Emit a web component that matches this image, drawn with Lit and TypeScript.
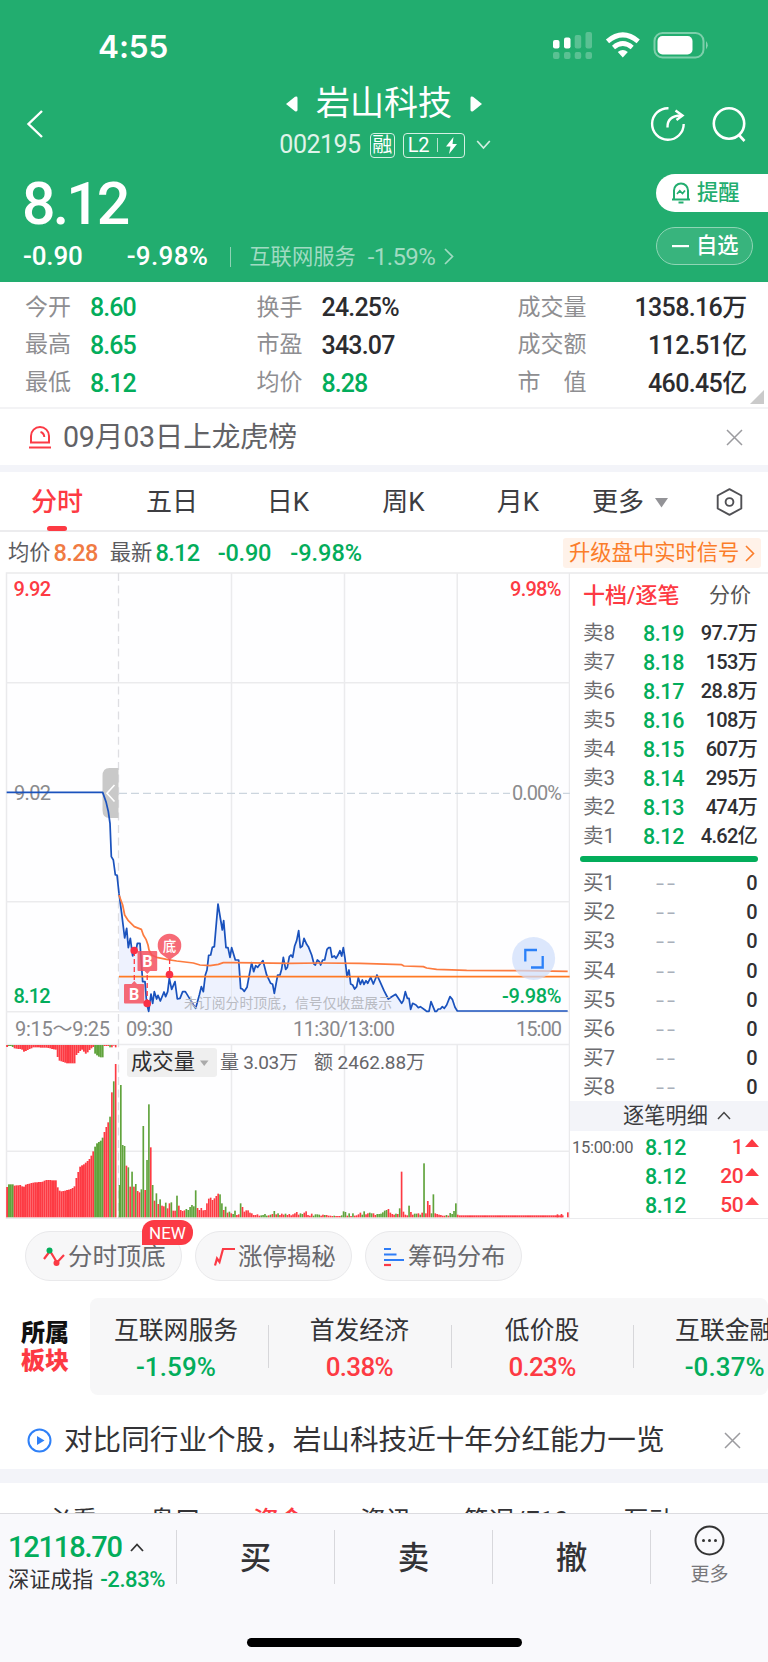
import { LitElement, html, svg, css } from 'lit';
import { customElement, property } from 'lit/decorators.js';

const RED = '#fd3a43';
const GREEN = '#03ad5b';
const VOL_GREEN = '#60a33c';

type Pt = [number, number];

// Price curve, auction part followed by continuous trading (three units per pixel, origin at y = 850).
const AUCTION: Pt[] = [
  [20, -173], [308, -173], [318, -145], [325, -115], [330, -80], [334, 20], [340, 30], [346, 75], [351, 75], [357, 130],
];
const PRICE: Pt[] = [
  [357, 130], [365, 190], [374, 264], [380, 235], [385, 293], [391, 265], [398, 318], [403, 300], [408, 302], [412, 280],
  [420, 280], [428, 395], [435, 395], [440, 460], [446, 484], [453, 432], [458, 460], [463, 425], [470, 447], [474, 436],
  [481, 453], [492, 426], [497, 440], [503, 425], [508, 385], [515, 418], [525, 395], [532, 447], [540, 445], [548, 425],
  [556, 425], [587, 475], [598, 435], [604, 410], [610, 425], [616, 375], [621, 360], [626, 316], [632, 315], [637, 292],
  [643, 290], [654, 162], [667, 240], [671, 212], [678, 293], [684, 293], [690, 322], [695, 293], [706, 330], [716, 330],
  [722, 415], [727, 417], [733, 424], [741, 412], [746, 385], [755, 338], [761, 365], [767, 347], [773, 352], [778, 345],
  [789, 332], [800, 375], [812, 400], [818, 403], [823, 430], [833, 375], [840, 375], [845, 357], [850, 322], [857, 358],
  [862, 352], [868, 320], [873, 315], [878, 322], [884, 288], [890, 272], [896, 242], [901, 293], [907, 288], [912, 265],
  [920, 283], [925, 290], [935, 315], [942, 342], [946, 345], [952, 330], [958, 335], [962, 345], [968, 330], [974, 330],
  [981, 298], [986, 293], [991, 293], [996, 322], [1003, 318], [1008, 325], [1014, 315], [1020, 302], [1025, 318],
  [1030, 293], [1035, 325], [1041, 380], [1047, 360], [1052, 402], [1058, 405], [1064, 417], [1070, 410], [1075, 383],
  [1081, 403], [1087, 390], [1092, 403], [1098, 392], [1103, 400], [1112, 382], [1120, 402], [1131, 375], [1140, 395],
  [1152, 422], [1165, 447], [1175, 440], [1187, 433], [1205, 460], [1210, 452], [1216, 425], [1222, 445], [1227, 445],
  [1232, 478], [1238, 460], [1248, 465], [1255, 473], [1261, 470], [1275, 480], [1280, 484], [1287, 484], [1293, 455],
  [1305, 484], [1310, 484], [1315, 477], [1321, 477], [1327, 470], [1333, 475], [1340, 465], [1350, 440], [1357, 448],
  [1365, 472], [1372, 483], [1703, 483],
];
const AVERAGE: Pt[] = [
  [357, 135], [368, 165], [374, 195], [385, 212], [403, 230], [424, 238], [430, 255], [438, 268], [444, 285], [447, 300],
  [455, 315], [470, 322], [500, 328], [530, 333], [580, 339], [600, 345], [630, 347], [655, 343], [670, 338], [700, 338],
  [870, 340], [960, 339], [1080, 340], [1205, 344], [1212, 348], [1270, 350], [1280, 354], [1310, 358], [1400, 361],
  [1560, 362], [1703, 364],
];

// Call-auction volume envelopes (three units per pixel, origin at y = 1030).
const AUCTION_VOL: Pt[] = [
  [20, 473], [24, 463], [38, 463], [42, 467], [64, 465], [68, 473], [78, 463], [105, 457], [130, 455], [135, 450],
  [169, 451], [173, 475], [180, 485], [195, 482], [215, 476], [224, 468], [230, 438], [240, 410], [255, 400], [270, 385],
  [281, 360], [288, 342], [305, 330], [315, 300], [325, 275], [330, 260], [335, 190], [341, 155], [347, 100],
];
const UNMATCHED: Pt[] = [
  [20, 52], [24, 48], [36, 48], [40, 55], [65, 58], [70, 66], [78, 62], [100, 52], [140, 53], [169, 60], [174, 90],
  [200, 100], [224, 100], [229, 74], [245, 58], [258, 72], [270, 58], [280, 50], [284, 70], [298, 82], [308, 82],
  [312, 48], [325, 48], [330, 52], [335, 53], [341, 47], [347, 52],
];
const inRanges = (x: number, r: number[][]) => r.some(([a, b]) => x >= a && x <= b);

function sample(pts: Pt[], x: number): number {
  for (let i = 1; i < pts.length; i++) {
    if (x <= pts[i][0]) {
      const [x0, y0] = pts[i - 1];
      const [x1, y1] = pts[i];
      return y0 + ((y1 - y0) * (x - x0)) / (x1 - x0);
    }
  }
  return pts[pts.length - 1][1];
}

// Volume bar heights; a negative number is a falling minute.
const OPEN_VOL = [
  -397, -217, -214, 155, -150, 92, -137, 92, -100, 79, 75, -84, -274, 82, -172, -339, 210, -97, 50, -72, 40, -54, 35, 33,
  -44, 27, 42, -45, 20, 20, -65, 35, 22, 19, 21, -25, -22, -31, -37, -33, -81, 28, 22, 28, 21, 22, 42, 56, 59, 52, 57, 64,
  71, -69, -42, 22, -32, 14, -17, 12, -10, -20, 7, 9, -42, 31, 17, 21, 21, 14, 12, 7, 7, 9, 5, -6, -7, -10, -5, 6, -8, 10,
  -19, 9, -12, 7, 11, 8, -11, 7, 10, 6, 9, 12, 16, 8, -12, -10, 14, 18, 7, 5, 11, -5, -9, -9, -8, 5, 8, -7, 7, 5, 5, 4,
  -5, 4, 4, 4, -6, -18, -16, 5, -12, 4, -12, 5, 6, 9, 14, -8, -18, 9, 12, -14, -12, 12, 7, -10, -10, -11, -15, -20,
  -22, 25, 14, 10, 8, -11, 10, -27, 137, 17, 8, 6, -35, 16, 8, -11, -11, 12, -8, 14, -162, 12, 49, 37, -12, -69, 12, 10, 8,
  7, 5, 5, -7, 5, -13, -10, -19, -42, 8,
];

const line = (pts: Pt[]) => pts.map((p) => p.join(',')).join(' ');

@customElement('minute-chart')
export class MinuteChart extends LitElement {
  static styles = css`
    :host { display: block; width: 570px; height: 647px; flex: none; }
    svg { display: block; font-family: Roboto, 'Noto Sans CJK SC', sans-serif; font-size: 20px; }
    .m { font-weight: 500; }
    .bold { font-weight: 700; }
  `;

  private bars() {
    const out: unknown[] = [];
    const bar = (x: number, y: number, h: number, fill: string, w = 5) =>
      out.push(svg`<rect x=${x.toFixed(1)} y=${y} width=${w} height=${h} fill=${fill}></rect>`);
    for (let i = 0; i < 59; i++) {
      const x = 18.5 + i * 5.62;
      const m = x + 2.3;
      const top = Math.round(sample(AUCTION_VOL, m));
      const w = i > 52 ? 5 : 5.7;
      bar(x, top, 562 - top, inRanges(m, [[22, 39], [283, 310], [327, 333], [338, 344]]) ? VOL_GREEN : RED, w);
      const low = sample(UNMATCHED, m);
      bar(x, 45, Math.round(low - 45), inRanges(m, [[22, 39], [283, 310], [327, 333]]) ? VOL_GREEN : RED, w);
    }
    bar(356, 465, 97, VOL_GREEN);
    OPEN_VOL.forEach((v, i) => bar(360 + i * 5.615, 562 - Math.abs(v), Math.abs(v), v < 0 ? VOL_GREEN : RED));
    for (let x = 360 + OPEN_VOL.length * 5.615; x < 1690; x += 5.615) bar(x, 556, 6, RED, 5.7);
    bar(1670, 553, 9, RED);
    bar(1682, 552, 10, RED);
    bar(1701, 547, 15, RED);
    return out;
  }

  render() {
    return html`<svg width="570" height="647" viewBox="0 572 570 647">
      <rect x="6.5" y="573" width="563" height="645.5" fill="#fefeff" stroke="#eaeaec" stroke-width="1.5"></rect>
      <g stroke="#ebebed" stroke-width="1.5">
        <path d="M6 682.8H570M6 901.8H570M6 1011.7H570M6 1044.5H570M6 1151.3H570"></path>
        <path d="M231.5 573V1011M344.5 573V1011M457.2 573V1011M231.5 1044V1218M344.5 1044V1218M457.2 1044V1218"></path>
      </g>
      <path d="M118.5 573V1218" stroke="#dedee2" stroke-width="1.3" stroke-dasharray="8 4.6"></path>
      <path d="M119 793.3H570" stroke="#ccd5de" stroke-width="1.2" stroke-dasharray="8 4"></path>
      <g transform="translate(0 850) scale(.33333)" fill="none" stroke-linejoin="round">
        <polygon points="357,484 ${line(PRICE.slice(0, -1))} 1372,484" fill="#eef2fe"></polygon>
      </g>
      <path d="M119 902H231M231.5 902V1011M344.5 940V1011" stroke="#e6e8ee" stroke-width="1"></path>
      <text x="14" y="800.3" fill="#8b8b8d" textLength="37">9.02</text>
      <path d="M118.5 768H109.500Q102.500 768 102.500 776V810Q102.500 818 109.500 818H118.500Z" fill="#c9c9c9"></path>
      <path d="M114.500 785L107 793.300L114.500 801.500" fill="none" stroke="#fff" stroke-width="1.6"></path>
      <g transform="translate(0 850) scale(.33333)" fill="none" stroke-linejoin="round" stroke-width="5.200">
        <polyline points=${line(AUCTION)} stroke="#1a52bd"></polyline>
        <polyline points=${line(PRICE)} stroke="#1a52bd"></polyline>
        <polyline points=${line(AVERAGE)} stroke="#fc7b3f"></polyline>
        <path d="M357 380H1709" stroke="#ff7a24"></path>
      </g>
      <text x="13.500" y="596" fill=${RED} class="m" textLength="37.500">9.92</text>
      <text x="510" y="596" fill=${RED} class="m" textLength="51.500">9.98%</text>
      <rect x="510" y="790" width="53" height="6" fill="#fefeff"></rect>
      <text x="512" y="800.300" fill="#8b8b8d" textLength="50">0.00%</text>
      <text x="13.500" y="1003.300" fill=${GREEN} class="m" textLength="37">8.12</text>
      <text x="502" y="1003.300" fill=${GREEN} class="m" textLength="59.500">-9.98%</text>
      <text x="184" y="1007.500" fill="#b9bbc2" font-size="13.800" textLength="208">未订阅分时顶底，信号仅收盘展示</text>
      <g fill="#88888b">
        <text x="15" y="1036" textLength="95">9:15～9:25</text>
        <text x="126" y="1036" textLength="47">09:30</text>
        <text x="293" y="1036" textLength="102">11:30/13:00</text>
        <text x="516" y="1036" textLength="46">15:00</text>
      </g>

      <g stroke=${RED} stroke-width="1.300" stroke-dasharray="5 3"><path d="M134.300 951V981M147.200 975V1003M169.600 959V974"></path></g>
      <g fill="#f5525f" fill-opacity=".86">
        <path d="M138.500 951H156.200Q157.200 951 157.200 952V970Q157.200 971 156.200 971H150L147.300 974L144.500 971H138.500Q137.500 971 137.500 970V952Q137.500 951 138.500 951Z"></path>
        <path d="M125 984H131.500L134.300 981L137 984H143.200Q144.200 984 144.200 985V1002.500Q144.200 1003.500 143.200 1003.500H125Q124 1003.500 124 1002.500V985Q124 984 125 984Z"></path>
        <path d="M169.500 960L162.500 955A11.800 11.800 0 1 1 176.500 955Z"></path>
      </g>
      <g fill="#fff" text-anchor="middle">
        <text x="147.300" y="967" font-size="16" class="bold">B</text>
        <text x="134.200" y="1000" font-size="16" class="bold">B</text>
        <text x="169.500" y="951" font-size="13.500" class="m">底</text>
      </g>
      <g fill="#fa3046"><circle cx="134.200" cy="950.500" r="3.800"></circle><circle cx="147.200" cy="1003.500" r="3.800"></circle><circle cx="169.500" cy="974.500" r="3.800"></circle></g>
      <circle cx="533.600" cy="958.500" r="21.500" fill="#cfdefb" fill-opacity=".72"></circle>
      <path d="M525.300 961.500V950H537M531 967.500H542.700V956" fill="none" stroke="#2b80f8" stroke-width="2.300"></path>

      <g transform="translate(0 1030) scale(.33333)">${this.bars()}</g>
      <rect x="127" y="1048" width="90" height="29" rx="3" fill="#efefef"></rect>
      <text x="131" y="1069" fill="#2d2d30" font-size="21.300" textLength="64">成交量</text>
      <path d="M200 1060.500H208.500L204.200 1066Z" fill="#aaa"></path>
      <g fill="#66666a" font-size="19">
        <text x="220" y="1069" textLength="78">量 3.03万</text>
        <text x="314" y="1069" textLength="111">额 2462.88万</text>
      </g>
    </svg>`;
  }
}

@customElement('order-book')
export class OrderBook extends LitElement {
  static styles = css`
    :host { display: block; width: 198px; height: 647px; box-sizing: border-box; border-top: 2px solid #eeeeef; border-bottom: 1.5px solid #ebebed;
      font: 20px/29.15px Roboto, 'Noto Sans CJK SC', sans-serif; color: #303033; }
    .head { display: flex; height: 44.500px; align-items: center; padding: 0 17px 2px 13px; justify-content: space-between; font-size: 21px; color: #555; box-sizing: border-box; }
    .head b { color: #fd3a43; font-weight: 500; font-size: 22px; }
    .row { display: grid; grid-template-columns: 43px 58px 1fr; height: 29.15px; padding: 0 11px 0 13px; white-space: nowrap; align-items: center; }
    .lbl { color: #6c6c70; font-size: 20.500px; letter-spacing: -.1px; }
    .px { color: #03ad5b; font-weight: 500; font-size: 21.500px; text-align: right; letter-spacing: -.4px; }
    .qty { text-align: right; font-size: 20px; font-weight: 500; letter-spacing: -.7px; }
    .none { display: flex; gap: 4px; padding-left: 30px; }
    .none span { font-size: 20px; width: 7px; transform: scaleX(1.45); transform-origin: left; color: #a9b0bb; }
    .strength { height: 6px; margin: 4.500px 10px 7px; border-radius: 3px; background: #03ad5b; }
    .detail { height: 30px; display: flex; align-items: center; justify-content: center; gap: 9px; background: #f3f4f9; font-size: 21.200px; color: #3c3c40; margin: -1.500px 0 2px; padding-left: 16px; }
    .tick { padding: 0 9px 0 2px; grid-template-columns: 69px 43px 1fr; }
    .tick .px { width: 45px; }
    .time { font-size: 16.5px; letter-spacing: -.3px; color: #5e5e62; }
    .up { color: #fd3a43; font-weight: 500; display: flex; justify-content: flex-end; gap: 2px; letter-spacing: -.6px; font-size: 21px; }
    .up svg { margin-top: 6px; }
  `;
  render() {
    const asks = [['8', '8.19', '97.7万'], ['7', '8.18', '153万'], ['6', '8.17', '28.8万'], ['5', '8.16', '108万'], ['4', '8.15', '607万'], ['3', '8.14', '295万'], ['2', '8.13', '474万'], ['1', '8.12', '4.62亿']];
    return html`
      <div class="head"><b>十档/逐笔</b><span>分价</span></div>
      ${asks.map(([n, p, q]) => html`<div class="row"><span class="lbl">卖${n}</span><span class="px">${p}</span><span class="qty">${q}</span></div>`)}
      <div class="strength"></div>
      ${[1, 2, 3, 4, 5, 6, 7, 8].map((n) => html`<div class="row"><span class="lbl">买${n}</span><span class="none"><span>-</span><span>-</span></span><span class="qty">0</span></div>`)}
      <div class="detail">逐笔明细<svg width="14" height="9" viewBox="0 0 14 9"><path d="M1 8L7 1.500L13 8" fill="none" stroke="#444" stroke-width="1.500"></path></svg></div>
      ${[['15:00:00', '1'], ['', '20'], ['', '50']].map(([t, q]) => html`<div class="row tick"><span class="time">${t}</span><span class="px">8.12</span>
        <span class="up">${q}<svg width="14" height="9"><path d="M7 0L14 8H0Z" fill="#fd3a43"></path></svg></span></div>`)}
    `;
  }
}

@customElement('close-mark')
export class CloseMark extends LitElement {
  static styles = css`:host { display: block; width: 17px; height: 17px; } svg { display: block; }`;
  render() {
    return html`<svg width="17" height="17"><path d="M1 1L16 16M16 1L1 16" stroke="#9b9b9f" stroke-width="1.500"></path></svg>`;
  }
}

@customElement('stat-cell')
export class StatCell extends LitElement {
  @property() label = '';
  @property() value = '';
  @property({ type: Boolean }) down = false;
  @property({ type: Boolean }) wide = false;
  static styles = css`
    :host { display: flex; align-items: center; height: 37.7px; font-size: 23px; white-space: pre; }
    .l { color: #8e8e91; width: 65px; }
    .v { font-size: 25px; font-weight: 500; letter-spacing: -.8px; color: #2c2c2f; padding-top: 2px; }
    .v.down { color: #03ad5b; letter-spacing: -.95px; }
    .v.wide { margin-left: auto; letter-spacing: -.65px; }
  `;
  render() {
    return html`<span class="l">${this.label}</span><span class="v ${this.down ? 'down' : ''} ${this.wide ? 'wide' : ''}">${this.value}</span>`;
  }
}

@customElement('app-root')
export class AppRoot extends LitElement {
  static styles = css`
    :host { display: flex; flex-direction: column; width: 768px; height: 1662px; overflow: hidden; background: #fff;
      font-family: Roboto, 'Noto Sans CJK SC', sans-serif; color: #333336; line-height: 1.2; white-space: nowrap; }
    svg { display: block; flex: none; }
    .row { display: flex; align-items: center; }
    header { height: 282px; background: #22ad6f; color: #fff; flex: none; }
    .status { display: flex; height: 84px; padding: 6px 59px 0 98px; box-sizing: border-box; align-items: center; justify-content: space-between; }
    .clock { font: 600 31.5px Inter, sans-serif; letter-spacing: -.1px; margin-top: 3px; }
    .nav { display: grid; grid-template-columns: 180px 1fr 180px; grid-template-rows: 80px; height: 80px; align-items: center; }
    .back { padding-left: 26px; }
    .tools { display: flex; justify-content: flex-end; gap: 26px; padding-right: 22px; }
    .title { display: flex; flex-direction: column; align-items: center; gap: 6px; align-self: start; margin-top: -2px; }
    .name { display: flex; align-items: center; gap: 18px; font-size: 34px; line-height: 42px; }
    .name svg { margin-top: 2px; }
    .code { display: flex; align-items: center; font-size: 25px; letter-spacing: -.5px; line-height: 30px; margin-left: 2px; }
    .code .num { opacity: .86; }
    .tag { border: 1.6px solid #d5f0e3; border-radius: 4px; height: 25px; box-sizing: border-box; line-height: 22px; font-size: 20px; margin-left: 9px; padding: 0 1.500px; letter-spacing: 0; display: flex; align-items: center; }
    .l2 { width: 62px; margin-left: 8px; font-size: 20px; padding-left: 4px; letter-spacing: -.3px; }
    .l2 i { width: 1px; height: 14px; background: #b8e3cf; margin: 0 8px 0 8px; }
    .caret { margin-left: 11px; }
    .main { display: flex; justify-content: space-between; padding: 11px 0 0 22px; }
    .price { font-size: 59px; font-weight: 500; letter-spacing: -2.9px; line-height: 58px; }
    .change { display: flex; align-items: center; font-size: 26px; font-weight: 500; letter-spacing: -.15px; margin-top: 9px; height: 30px; margin-left: 1px; }
    .change .pct { margin-left: 44px; letter-spacing: .35px; }
    .change i { width: 1px; height: 20px; background: #8fd3b5; margin: 0 18px 0 22px; }
    .sector { display: flex; align-items: center; color: #a0dbc2; font-weight: 400; font-size: 21.300px; letter-spacing: 0; }
    .sector span { font-size: 24px; letter-spacing: -.6px; margin: 0 9px 0 12px; }
    .btns { width: 112px; display: flex; flex-direction: column; gap: 15px; font-size: 21.300px; font-weight: 500; margin-top: -1px; }
    .remind { height: 38px; border-radius: 19px 0 0 19px; background: #fff; color: #22ad6f; display: flex; align-items: center; gap: 6px; padding-left: 15px; }
    .fav { height: 38px; width: 97px; box-sizing: border-box; border-radius: 19px; border: 1.500px solid #8fd5b5; background: #38b47d; display: flex; align-items: center; gap: 7px; padding-left: 15px; }
    .stats { height: 125px; display: grid; grid-template-columns: 231.500px 261px 229px; grid-auto-rows: 37.700px; padding: 6.500px 0 0 25px; box-sizing: border-box; flex: none; position: relative; }
    .corner { position: absolute; right: 4px; bottom: 3px; }
    .notice { height: 58px; border-top: 2px solid #f3f3f5; box-sizing: border-box; padding: 0 25px 0 29px; color: #626266; font-size: 28.600px; flex: none; }
    .notice .txt { margin-left: 12px; flex: 1; }
    .notice .txt.d { letter-spacing: -.2px; }
    .band { background: #f3f4f9; flex: none; height: 7px; }
    .band.thick { height: 14px; }
    .tabs { height: 60px; border-bottom: 2px solid #ececee; box-sizing: border-box; font-size: 26px; display: grid; grid-template-columns: 114px 116px 116px 115px 114px 103px 90px; color: #3d3d41; text-align: center; flex: none; align-items: center; }
    .tabs > div { padding-top: 2px; }
    .tabs .on { color: #fd3a43; font-weight: 500; display: flex; flex-direction: column; align-items: center; height: 59px; padding-top: 0; }
    .tabs .on span { line-height: 55px; padding-top: 3px; height: 51px; }
    .tabs .on i { width: 20px; height: 5px; border-radius: 2.500px; background: #fd3a43; }
    .tabs .more { display: flex; align-items: center; gap: 11px; padding-left: 17px; }
    .tabs .set { display: flex; padding-left: 38px; padding-top: 0; }
    .info { height: 40px; padding: 2px 7px 0 8px; box-sizing: border-box; font-size: 21.300px; color: #5b5b5f; flex: none; }
    .info b { font-weight: 500; font-size: 23.500px; letter-spacing: -.6px; color: #03ad5b; margin-left: 3px; margin-right: 14px; }
    .info b.avg { color: #f07b43; margin-right: 12px; }
    .info b.w { letter-spacing: -.2px; margin-left: 4px; margin-right: 15px; }
    .info b.p { letter-spacing: 0; }
    .upgrade { margin-left: auto; width: 198px; height: 30px; box-sizing: border-box; padding-left: 6px; background: #fff2e9; border-radius: 3px; color: #fb7d2a; display: flex; align-items: center; gap: 6px; }
    .charts { display: flex; height: 647px; flex: none; }
    .pills { display: flex; gap: 13px; padding: 12px 0 17px 25px; flex: none; }
    .pill { position: relative; width: 157px; height: 50px; box-sizing: border-box; border-radius: 25px; border: 1.500px solid #e9e9eb; background: #f7f7f8; display: flex; align-items: center; gap: 2px; padding: 2px 0 0 16px; font-size: 24.400px; color: #69696d; }
    .new { position: absolute; right: -12px; top: -12px; width: 51px; height: 25px; border-radius: 12px 12px 12px 0; background: #fb3a45; color: #fff; font: 17px/26px Roboto, sans-serif; text-align: center; }
    .blocks { display: flex; height: 97px; flex: none; }
    .side { width: 90px; flex: none; font-weight: 900; font-size: 24px; line-height: 28px; padding: 21px 0 0 21px; box-sizing: border-box; color: #111; }
    .side em { font-style: normal; color: #fd3a43; display: block; }
    .strip { width: 678px; overflow: hidden; background: #f7f7f8; border-radius: 8px; display: flex; flex: none; }
    .blk { width: 182.700px; box-sizing: border-box; flex: none; text-align: center; font-size: 24.800px; padding-top: 17px; line-height: 31px; }
    .blk:first-child { width: 178px; padding-right: 6px; }
    .blk + .blk { background: linear-gradient(#d7d7da, #d7d7da) no-repeat 0 27px / 1px 43px; }
    .blk b { display: block; font-weight: 500; font-size: 26px; letter-spacing: -.7px; line-height: 43px; color: #fd3a43; }
    .blk b.down { color: #03ad5b; letter-spacing: .1px; }
    .promo { height: 74px; padding: 17px 27px 0 27px; border-top: 0; color: #333336; }
    .cut { height: 30px; flex: none; overflow: hidden; font-size: 25.800px; }
    .cut div { padding: 20px 0 0 46px; display: grid; grid-template-columns: 103px 104px 107px 103px 160px 90px; line-height: 36px; }
    .cut .on { color: #fd3a43; font-weight: 500; }
    footer { height: 149px; flex: none; background: #f9f9fc; border-top: 1.500px solid #dcdce0; box-sizing: border-box; }
    .actions { display: flex; height: 100px; }
    .index { width: 176px; box-sizing: border-box; padding: 14px 0 0 8px; font-size: 21.300px; flex: none; }
    .index .big { display: flex; align-items: center; gap: 8px; font-size: 29px; color: #03ad5b; font-weight: 500; letter-spacing: -1.200px; line-height: 38px; }
    .index .small { display: flex; align-items: center; gap: 7px; line-height: 27px; }
    .index .small b { font-weight: 500; color: #03ad5b; font-size: 22px; letter-spacing: -.4px; }
    .act { width: 158px; border-left: 1.500px solid #d8d8dc; box-sizing: border-box; height: 54px; margin-top: 16px; text-align: center; font-size: 31.500px; line-height: 58px; font-weight: 500; flex: none; }
    .last { flex: 1; border-left: 1.500px solid #d8d8dc; height: 54px; margin-top: 16px; display: flex; flex-direction: column; align-items: center; font-size: 19px; color: #77777b; gap: 8px; }
    .last svg { margin-top: -5px; }
    .home { width: 275px; height: 9px; border-radius: 5px; background: #000; margin: 24px auto 0; }
  `;

  render() {
    const cells: [string, string, boolean, boolean][] = [
      ['今开', '8.60', true, false], ['换手', '24.25%', false, false], ['成交量', '1358.16万', false, true],
      ['最高', '8.65', true, false], ['市盈', '343.07', false, false], ['成交额', '112.51亿', false, true],
      ['最低', '8.12', true, false], ['均价', '8.28', true, false], ['市　值', '460.45亿', false, true],
    ];
    return html`
      <header>
        <div class="status">
          <span class="clock">4:55</span>
          <svg width="157" height="30" viewBox="552 30 157 30" fill="#fff">
            <rect x="553" y="40" width="6.500" height="8.500" rx="2"></rect><rect x="564" y="37.500" width="6.500" height="11" rx="2"></rect>
            <g opacity=".25"><rect x="574.700" y="35" width="6.500" height="13.500" rx="2"></rect><rect x="585.500" y="32" width="6.500" height="16.500" rx="2"></rect>
            <rect x="553" y="52" width="6.500" height="7" rx="2"></rect><rect x="564" y="52" width="6.500" height="7" rx="2"></rect><rect x="574.700" y="52" width="6.500" height="7" rx="2"></rect><rect x="585.500" y="52" width="6.500" height="7" rx="2"></rect></g>
            <path d="M622.800 57.500L617.800 52Q622.800 48 627.800 52Z"></path>
            <path d="M613.500 47.500Q622.800 39.500 632.200 47.500" fill="none" stroke="#fff" stroke-width="4.600"></path>
            <path d="M607.500 41.300Q622.800 28.500 638.200 41.300" fill="none" stroke="#fff" stroke-width="5"></path>
            <rect x="654.500" y="33" width="49" height="24.500" rx="8" fill="none" stroke="#fff" stroke-opacity=".42" stroke-width="2"></rect>
            <rect x="657.500" y="36" width="35" height="18.500" rx="5"></rect>
            <path d="M706 41Q709.500 45 706 49.500Z" opacity=".45"></path>
          </svg>
        </div>
        <div class="nav">
          <div class="back"><svg width="18" height="30" viewBox="0 0 18 30"><path d="M16 2L2.500 15L16 28" fill="none" stroke="#fff" stroke-width="2.400"></path></svg></div>
          <div class="title">
            <div class="name">
              <svg width="12" height="16"><path d="M0 8L9 .800Q11.500 0 11.500 2V14Q11.500 16 9 15.200Z" fill="#fff"></path></svg>岩山科技<svg width="12" height="16"><path d="M12 8L3 .800Q.500 0 .500 2V14Q.500 16 3 15.200Z" fill="#fff"></path></svg>
            </div>
            <div class="code"><span class="num">002195</span><span class="tag">融</span><span class="tag l2">L2<i></i><svg width="11" height="17"><path d="M7.500 0L0 9.500H4.500L3 17L11 7H6.500Z" fill="#fff"></path></svg></span>
              <svg class="caret" width="15" height="10"><path d="M1.200 1L7.500 8L13.800 1" fill="none" stroke="#d3eee1" stroke-width="1.700"></path></svg></div>
          </div>
          <div class="tools">
            <svg width="36" height="36" viewBox="0 0 36 36" fill="none" stroke="#fff" stroke-width="2.400"><path d="M18.500 2.200A15.800 15.800 0 1 0 33.700 18"></path><path d="M17.500 21.500Q17 10 31 9.500"></path><path d="M25.500 4.500L32.500 9.500L26.500 14"></path></svg>
            <svg width="34" height="36" viewBox="0 0 34 36" fill="none" stroke="#fff" stroke-width="2.600"><circle cx="17" cy="17.500" r="15.200"></circle><path d="M26.500 28.500L32.500 35"></path></svg>
          </div>
        </div>
        <div class="main">
          <div>
            <div class="price">8.12</div>
            <div class="change"><span>-0.90</span><span class="pct">-9.98%</span><i></i>
              <div class="sector">互联网服务<span>-1.59%</span><svg width="10" height="17"><path d="M1 1L8.500 8.500L1 16" fill="none" stroke="#a0dbc2" stroke-width="1.700"></path></svg></div></div>
          </div>
          <div class="btns">
            <div class="remind"><svg width="20" height="22" viewBox="0 0 20 22" fill="none" stroke="#22ad6f" stroke-width="2"><path d="M1 17.500H19M3 17V8.500A7 7 0 0 1 17 8.500V17"></path><path d="M7.500 20.500H12.500"></path><path d="M6 12L8.800 8.800L11.500 11.500L14 8.500" stroke-width="1.700"></path></svg>提醒</div>
            <div class="fav"><svg width="17" height="3"><rect width="17" height="2.200" fill="#fff"></rect></svg>自选</div>
          </div>
        </div>
      </header>

      <section class="stats">
        ${cells.map(([l, v, d, w]) => html`<stat-cell label=${l} value=${v} ?down=${d} ?wide=${w}></stat-cell>`)}
        <svg class="corner" width="14" height="14"><path d="M14 0V14H0Z" fill="#cacaca"></path></svg>
      </section>

      <div class="row notice">
        <svg width="22" height="23" viewBox="0 0 22 23" fill="none" stroke="#fb3a45" stroke-width="2"><path d="M2 16.500V10A9 9 0 0 1 20 10V16.500Z"></path><path d="M0 21.500H22M11.500 6Q15 7 15.300 11"></path></svg>
        <span class="txt d">09月03日上龙虎榜</span><close-mark></close-mark>
      </div>
      <div class="band"></div>

      <nav class="tabs">
        <div class="on"><span>分时</span><i></i></div><div>五日</div><div>日K</div><div>周K</div><div>月K</div>
        <div class="more">更多<svg width="13" height="10"><path d="M0 0H13L6.500 9.500Z" fill="#939397"></path></svg></div>
        <div class="set"><svg width="27" height="28" viewBox="0 0 27 28" fill="none" stroke="#505054" stroke-width="1.900"><path d="M13.500 1.200L25.300 7.500V20.500L13.500 26.800L1.700 20.500V7.500Z" stroke-linejoin="round"></path><circle cx="13.500" cy="14" r="3.900"></circle></svg></div>
      </nav>

      <div class="row info">均价<b class="avg">8.28</b>最新<b>8.12</b><b class="w">-0.90</b><b class="w p">-9.98%</b>
        <div class="upgrade">升级盘中实时信号<svg width="10" height="17"><path d="M1 1L8.500 8.500L1 16" fill="none" stroke="#fb7d2a" stroke-width="1.600"></path></svg></div>
      </div>

      <div class="charts"><minute-chart></minute-chart><order-book></order-book></div>

      <div class="pills">
        <div class="pill"><svg width="24" height="20" viewBox="0 0 24 20"><path d="M2 12L8 4L15 15.500L22 8" fill="none" stroke="#fb3a45" stroke-width="2.200"></path><circle cx="7.500" cy="3.500" r="3" fill="#03ad5b"></circle><circle cx="14.500" cy="16" r="3" fill="#fb3a45"></circle></svg>分时顶底<span class="new">NEW</span></div>
        <div class="pill"><svg width="24" height="20" viewBox="0 0 24 20"><path d="M3 18.500L5 11.500L7.500 15L11 2H23" fill="none" stroke="#fb3a45" stroke-width="2.200"></path></svg>涨停揭秘</div>
        <div class="pill"><svg width="24" height="20"><path d="M2 2H9M2 7.500H14.500M2 13H22" stroke="#2f7df6" stroke-width="2.200"></path><path d="M2 18H9" stroke="#fb3a45" stroke-width="2.200"></path></svg>筹码分布</div>
      </div>

      <section class="blocks">
        <div class="side">所属<em>板块</em></div>
        <div class="strip">
          <div class="blk">互联网服务<b class="down">-1.59%</b></div>
          <div class="blk">首发经济<b>0.38%</b></div>
          <div class="blk">低价股<b>0.23%</b></div>
          <div class="blk">互联金融<b class="down">-0.37%</b></div>
        </div>
      </section>

      <div class="row notice promo">
        <svg width="25" height="25" viewBox="0 0 25 25"><circle cx="12.500" cy="12.500" r="11" fill="none" stroke="#2f80f7" stroke-width="2"></circle><path d="M10 8L17.500 12.500L10 17Z" fill="#2f80f7"></path></svg>
        <span class="txt">对比同行业个股，岩山科技近十年分红能力一览</span><close-mark></close-mark>
      </div>
      <div class="band thick"></div>
      <div class="cut"><div><span>必看</span><span>盘口</span><span class="on">资金</span><span>资讯</span><span>简况/F10</span><span>互动</span></div></div>

      <footer>
        <div class="actions">
          <div class="index">
            <div class="big">12118.70<svg width="14" height="9"><path d="M1 8L7 1.500L13 8" fill="none" stroke="#333" stroke-width="1.800"></path></svg></div>
            <div class="small">深证成指<b>-2.83%</b></div>
          </div>
          <div class="act">买</div><div class="act">卖</div><div class="act">撤</div>
          <div class="last"><svg width="31" height="31" viewBox="0 0 31 31"><circle cx="15.500" cy="15.500" r="14" fill="none" stroke="#333" stroke-width="2"></circle><g fill="#333"><circle cx="9.500" cy="15.500" r="1.500"></circle><circle cx="15.500" cy="15.500" r="1.500"></circle><circle cx="21.500" cy="15.500" r="1.500"></circle></g></svg>更多</div>
        </div>
        <div class="home"></div>
      </footer>
    `;
  }
}
